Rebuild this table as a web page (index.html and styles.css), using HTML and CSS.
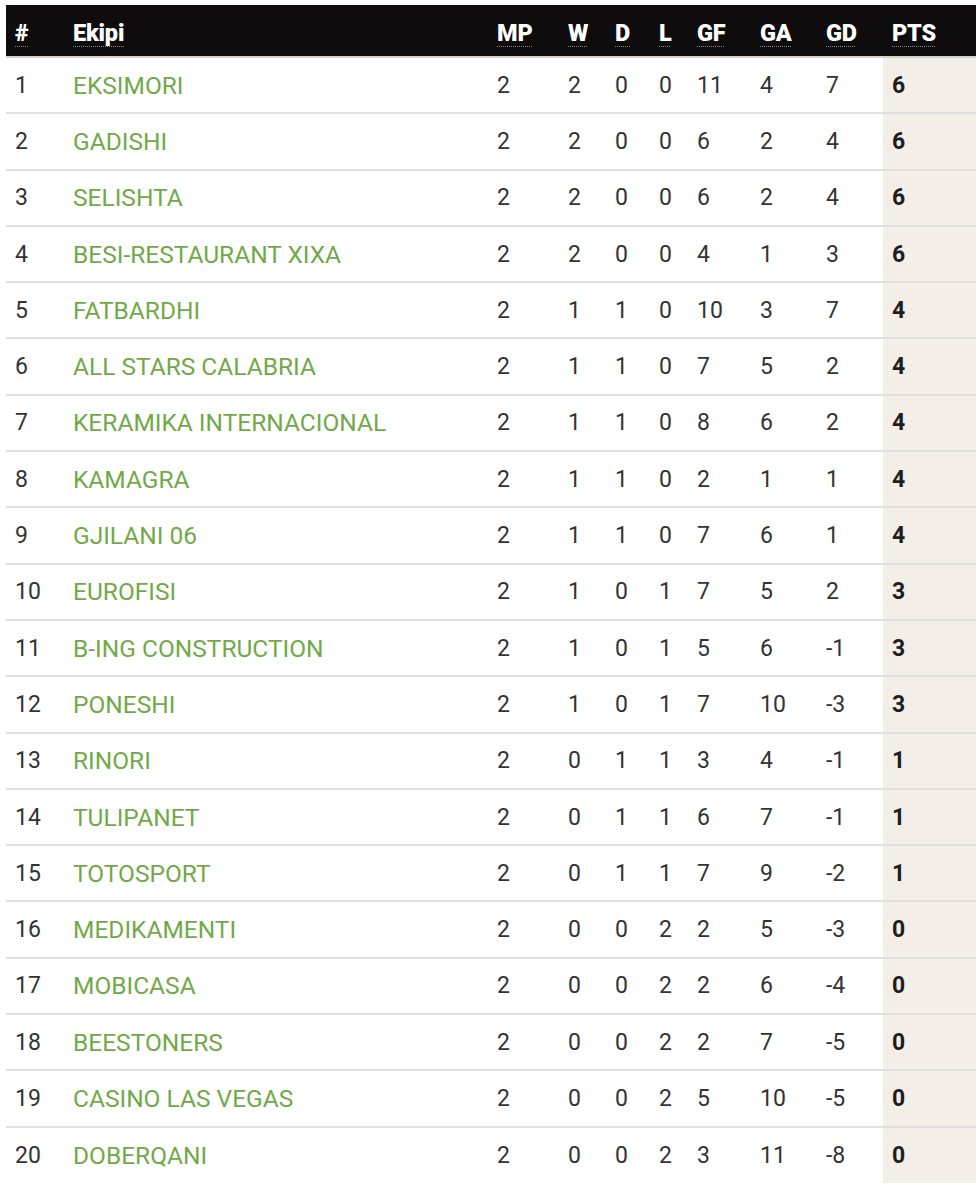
FILE: index.html
```html
<!DOCTYPE html>
<html>
<head>
<meta charset="utf-8">
<link rel="stylesheet" href="styles.css">
</head>
<body>
<div class="wrap">
<table class="standings">
<colgroup>
<col class="c-rank"><col class="c-team"><col class="c-mp"><col class="c-w"><col class="c-d"><col class="c-l"><col class="c-gf"><col class="c-ga"><col class="c-gd"><col class="c-pts">
</colgroup>
<thead>
<tr>
<th><abbr>#</abbr></th><th><abbr>Ekipi</abbr></th><th><abbr>MP</abbr></th><th><abbr>W</abbr></th><th><abbr>D</abbr></th><th><abbr>L</abbr></th><th><abbr>GF</abbr></th><th><abbr>GA</abbr></th><th><abbr>GD</abbr></th><th class="pts"><abbr>PTS</abbr></th>
</tr>
</thead>
<tbody>
<tr><td>1</td><td class="team">EKSIMORI</td><td>2</td><td>2</td><td>0</td><td>0</td><td>11</td><td>4</td><td>7</td><td class="pts">6</td></tr>
<tr><td>2</td><td class="team">GADISHI</td><td>2</td><td>2</td><td>0</td><td>0</td><td>6</td><td>2</td><td>4</td><td class="pts">6</td></tr>
<tr><td>3</td><td class="team">SELISHTA</td><td>2</td><td>2</td><td>0</td><td>0</td><td>6</td><td>2</td><td>4</td><td class="pts">6</td></tr>
<tr><td>4</td><td class="team">BESI-RESTAURANT XIXA</td><td>2</td><td>2</td><td>0</td><td>0</td><td>4</td><td>1</td><td>3</td><td class="pts">6</td></tr>
<tr><td>5</td><td class="team">FATBARDHI</td><td>2</td><td>1</td><td>1</td><td>0</td><td>10</td><td>3</td><td>7</td><td class="pts">4</td></tr>
<tr><td>6</td><td class="team">ALL STARS CALABRIA</td><td>2</td><td>1</td><td>1</td><td>0</td><td>7</td><td>5</td><td>2</td><td class="pts">4</td></tr>
<tr><td>7</td><td class="team">KERAMIKA INTERNACIONAL</td><td>2</td><td>1</td><td>1</td><td>0</td><td>8</td><td>6</td><td>2</td><td class="pts">4</td></tr>
<tr><td>8</td><td class="team">KAMAGRA</td><td>2</td><td>1</td><td>1</td><td>0</td><td>2</td><td>1</td><td>1</td><td class="pts">4</td></tr>
<tr><td>9</td><td class="team">GJILANI 06</td><td>2</td><td>1</td><td>1</td><td>0</td><td>7</td><td>6</td><td>1</td><td class="pts">4</td></tr>
<tr><td>10</td><td class="team">EUROFISI</td><td>2</td><td>1</td><td>0</td><td>1</td><td>7</td><td>5</td><td>2</td><td class="pts">3</td></tr>
<tr><td>11</td><td class="team">B-ING CONSTRUCTION</td><td>2</td><td>1</td><td>0</td><td>1</td><td>5</td><td>6</td><td>-1</td><td class="pts">3</td></tr>
<tr><td>12</td><td class="team">PONESHI</td><td>2</td><td>1</td><td>0</td><td>1</td><td>7</td><td>10</td><td>-3</td><td class="pts">3</td></tr>
<tr><td>13</td><td class="team">RINORI</td><td>2</td><td>0</td><td>1</td><td>1</td><td>3</td><td>4</td><td>-1</td><td class="pts">1</td></tr>
<tr><td>14</td><td class="team">TULIPANET</td><td>2</td><td>0</td><td>1</td><td>1</td><td>6</td><td>7</td><td>-1</td><td class="pts">1</td></tr>
<tr><td>15</td><td class="team">TOTOSPORT</td><td>2</td><td>0</td><td>1</td><td>1</td><td>7</td><td>9</td><td>-2</td><td class="pts">1</td></tr>
<tr><td>16</td><td class="team">MEDIKAMENTI</td><td>2</td><td>0</td><td>0</td><td>2</td><td>2</td><td>5</td><td>-3</td><td class="pts">0</td></tr>
<tr><td>17</td><td class="team">MOBICASA</td><td>2</td><td>0</td><td>0</td><td>2</td><td>2</td><td>6</td><td>-4</td><td class="pts">0</td></tr>
<tr><td>18</td><td class="team">BEESTONERS</td><td>2</td><td>0</td><td>0</td><td>2</td><td>2</td><td>7</td><td>-5</td><td class="pts">0</td></tr>
<tr><td>19</td><td class="team">CASINO LAS VEGAS</td><td>2</td><td>0</td><td>0</td><td>2</td><td>5</td><td>10</td><td>-5</td><td class="pts">0</td></tr>
<tr><td>20</td><td class="team">DOBERQANI</td><td>2</td><td>0</td><td>0</td><td>2</td><td>3</td><td>11</td><td>-8</td><td class="pts">0</td></tr>
</tbody>
</table>
</div>
</body>
</html>
```

FILE: styles.css
```css
html, body {
  margin: 0;
  padding: 0;
  background: #ffffff;
}

.wrap {
  padding: 5px 4px 0 6px;
}

.standings {
  width: 970px;
  border-collapse: collapse;
  table-layout: fixed;
  font-family: Roboto, "Liberation Sans", sans-serif;
  color: #333333;
}

.c-rank { width: 58px; }
.c-team { width: 424px; }
.c-mp { width: 71px; }
.c-w { width: 47px; }
.c-d { width: 44px; }
.c-l { width: 38px; }
.c-gf { width: 63px; }
.c-ga { width: 66px; }
.c-gd { width: 66px; }
.c-pts { width: 93px; }

.standings thead tr {
  background: #0e0c0c;
  height: 52px;
}

.standings th {
  text-align: left;
  padding: 4px 0 0 9px;
  font-size: 23.5px;
  font-weight: 900;
  color: #ffffff;
  letter-spacing: -0.2px;
  border-bottom: 2px solid #d9d1c6;
}

.standings abbr {
  text-decoration: underline dotted #8a8a8a;
  text-underline-offset: 5px;
  text-decoration-thickness: 1px;
}

.standings tbody tr {
  height: 56.3px;
  border-top: 2px solid #e0e0e0;
}

.standings tbody tr:first-child {
  border-top: none;
}

.standings td {
  padding: 0 0 0 9px;
  font-size: 23px;
  font-weight: 400;
  color: #333333;
  white-space: nowrap;
}

.standings td.team {
  color: #72a948;
  font-size: 24.5px;
}

.standings td.pts {
  background: #f3eee8;
  font-weight: 700;
  color: #1e1e1e;
}
```
